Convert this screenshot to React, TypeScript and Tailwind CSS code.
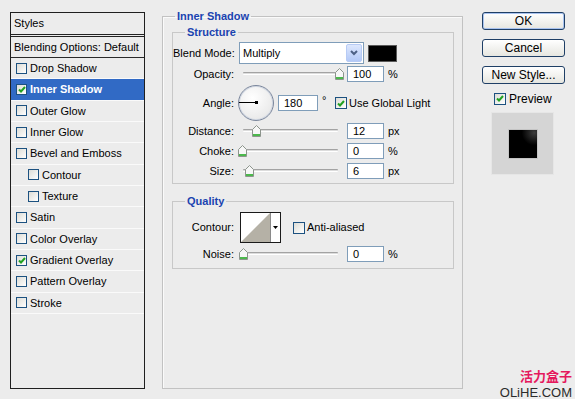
import type { JSX } from 'react'

const Check = ({ checked = false, small = false }: { checked?: boolean; small?: boolean }): JSX.Element => (
    <div className={`${small ? 'w-[11px] h-[11px]' : 'w-[12px] h-[12px]'} shrink-0 border border-[#1c5180] bg-gradient-to-br from-[#dcdcd6] to-white flex items-center justify-center`}>
        {checked && (
            <svg width="8" height="7" viewBox="0 0 8 7">
                <polyline points="1,3.5 3,5.5 7,1" fill="none" stroke="#21a121" strokeWidth="2" />
            </svg>
        )}
    </div>
)

const Thumb = ({ left }: { left: number }): JSX.Element => (
    <svg className="absolute top-[2px]" style={{ left }} width="9" height="12" viewBox="0 0 9 12">
        <polygon points="0.5,4.5 4.5,0.5 8.5,4.5 8.5,11.5 0.5,11.5" fill="#f7f7f7" stroke="#8d958d" />
        <rect x="1" y="9" width="7" height="2" fill="#4cb84c" />
    </svg>
)

const Slider = ({ pos }: { pos: number }): JSX.Element => (
    <div className="relative -ml-[2px] w-[108px] h-[16px]">
        <div className="ml-[6px] mt-[6px] w-[95px] h-[3px] border-t border-[#a3a3a3] border-b border-b-white bg-[#dcdcdc] rounded-[1px]" />
        <Thumb left={pos} />
    </div>
)

const Field = ({ value, w = 'w-[37px]' }: { value: string; w?: string }): JSX.Element => (
    <div className={`${w} h-[16px] border border-[#7f9db9] bg-white pl-[5px] leading-[14px]`}>{value}</div>
)

const Label = ({ text }: { text: string }): JSX.Element => (
    <div className="w-[66px] shrink-0 pr-[5px] text-right whitespace-nowrap">{text}</div>
)

const SliderRow = ({ label, pos, value, unit, top }: { label: string; pos: number; value: string; unit: string; top: string }): JSX.Element => (
    <div className={`flex items-center h-[16px] ${top}`}>
        <Label text={label} />
        <Slider pos={pos} />
        <div className="ml-[2px]"><Field value={value} /></div>
        <span className="ml-[4px]">{unit}</span>
    </div>
)

const Button = ({ text, primary = false, top = '' }: { text: string; primary?: boolean; top?: string }): JSX.Element => (
    <div className={`${top} w-[83px] h-[18px] rounded-[3px] border border-[#1f3f66] bg-gradient-to-b from-white to-[#e6e6e0] flex items-center justify-center text-[12px] ${primary ? 'shadow-[inset_0_0_0_1px_#a9c3ef]' : ''}`}>
        {text}
    </div>
)

const styleItems: [string, boolean, boolean, boolean][] = [
    ['Drop Shadow', false, false, false],
    ['Inner Shadow', true, false, true],
    ['Outer Glow', false, false, false],
    ['Inner Glow', false, false, false],
    ['Bevel and Emboss', false, false, false],
    ['Contour', false, true, false],
    ['Texture', false, true, false],
    ['Satin', false, false, false],
    ['Color Overlay', false, false, false],
    ['Gradient Overlay', true, false, false],
    ['Pattern Overlay', false, false, false],
    ['Stroke', false, false, false],
]

const App = (): JSX.Element => {
    return (
        <div className="relative w-[575px] h-[399px] overflow-hidden bg-[#ececec] flex items-start text-[11px] text-black font-['Liberation_Sans',Arial,sans-serif]">
            {/* Styles list */}
            <div className="ml-[10px] mt-[12px] w-[135px] h-[377px] border border-[#1f1f1f] flex flex-col">
                <div className="h-[24px] border-b-[3px] border-double border-[#222] pl-[3px] flex items-center">Styles</div>
                <div className="h-[21px] border-b border-[#2a2a2a] pl-[3px] flex items-center">Blending Options: Default</div>
                {styleItems.map(([name, checked, sub, selected]) => (
                    <div
                        key={name}
                        className={`h-[21.33px] border-b border-[#fafafa] flex items-center ${sub ? 'pl-[17px]' : 'pl-[5px]'} ${selected ? 'bg-[#316ac5] text-white font-bold' : ''}`}
                    >
                        <Check checked={checked} small />
                        <span className="ml-[3px]">{name}</span>
                    </div>
                ))}
            </div>

            {/* Inner Shadow panel */}
            <fieldset className="ml-[17px] mt-[10px] w-[301px] h-[379px] border border-[#c2c2c2] shadow-[inset_1px_1px_0_#fafafa]">
                <legend className="ml-[12px] px-[2px] font-bold text-[#1a43b0] leading-[12px]">Inner Shadow</legend>

                <fieldset className="ml-[9px] mt-[4px] w-[282px] border border-[#c8c8c8] pt-[4px] pb-[4px]">
                    <legend className="ml-[12px] px-[2px] font-bold text-[#1a43b0] leading-[12px]">Structure</legend>

                    <div className="flex items-center h-[22px]">
                        <Label text="Blend Mode:" />
                        <div className="w-[125px] h-[22px] border border-[#7f9db9] bg-white flex items-center">
                            <span className="pl-[3px]">Multiply</span>
                            <div className="ml-auto mr-[1px] w-[16px] h-[18px] rounded-[2px] border border-[#b7cbf5] bg-gradient-to-b from-[#dde7fd] to-[#b3c9f7] flex items-center justify-center">
                                <svg width="8" height="6" viewBox="0 0 8 6">
                                    <polyline points="1,1 4,4 7,1" fill="none" stroke="#4d6185" strokeWidth="2" />
                                </svg>
                            </div>
                        </div>
                        <div className="ml-[4px] w-[29px] h-[17px] bg-black border border-[#5a5a5a]" />
                    </div>

                    <SliderRow label="Opacity:" pos={98} value="100" unit="%" top="mt-[2px]" />

                    <div className="flex items-center h-[36px] mt-[3px]">
                        <Label text="Angle:" />
                        <div className="relative -ml-[1px] w-[36px] h-[36px] rounded-full border border-[#7a869c] bg-[radial-gradient(circle_at_40%_35%,#ffffff,#e2e2e2)] shadow-[inset_0_0_0_1px_#d3d9e3]">
                            <div className="absolute left-0 top-[16px] w-[18px] h-[1px] bg-black" />
                            <div className="absolute left-[16px] top-[15px] w-[3px] h-[3px] bg-black" />
                        </div>
                        <div className="ml-[4px]"><Field value="180" w="w-[40px]" /></div>
                        <span className="ml-[4px] w-[13px] -mt-[6px]">°</span>
                        <Check checked />
                        <span className="ml-[2px]">Use Global Light</span>
                    </div>

                    <SliderRow label="Distance:" pos={15} value="12" unit="px" top="mt-[2px]" />
                    <SliderRow label="Choke:" pos={1} value="0" unit="%" top="mt-[4px]" />
                    <SliderRow label="Size:" pos={8} value="6" unit="px" top="mt-[4px]" />
                </fieldset>

                <fieldset className="ml-[9px] mt-[11px] w-[282px] border border-[#c8c8c8] pt-[5px] pb-[6px]">
                    <legend className="ml-[12px] px-[2px] font-bold text-[#1a43b0] leading-[12px]">Quality</legend>

                    <div className="flex items-center h-[31px]">
                        <Label text="Contour:" />
                        <div className="ml-[1px] w-[41px] h-[31px] border border-[#1a1a1a] flex bg-white">
                            <svg width="29" height="29" viewBox="0 0 29 29" className="shrink-0">
                                <polygon points="0,29 29,0 29,29" fill="#b5b1a6" />
                            </svg>
                            <div className="flex-1 border-l border-[#8a8a8a] flex items-center justify-center">
                                <svg width="5" height="3" viewBox="0 0 5 3">
                                    <polygon points="0,0 5,0 2.5,3" fill="#000" />
                                </svg>
                            </div>
                        </div>
                        <div className="ml-[12px]"><Check /></div>
                        <span className="ml-[2px]">Anti-aliased</span>
                    </div>

                    <SliderRow label="Noise:" pos={2} value="0" unit="%" top="mt-[3px]" />
                </fieldset>
            </fieldset>

            {/* Buttons & preview */}
            <div className="ml-[19px] mt-[12px] w-[83px] flex flex-col">
                <Button text="OK" primary />
                <Button text="Cancel" top="mt-[9px]" />
                <Button text="New Style..." top="mt-[9px]" />
                <div className="mt-[8px] h-[13px] flex items-center text-[12px]">
                    <div className="ml-[12px]"><Check checked /></div>
                    <span className="ml-[3px]">Preview</span>
                </div>
                <div className="mt-[7px] ml-[9px] w-[63px] h-[63px] bg-[#d5d5d5] border border-[#e6e6e6] flex items-center justify-center">
                    <div className="w-[30px] h-[30px] bg-[radial-gradient(circle_at_90%_10%,#3c3c3c,#000000_35%)] border border-[#c4c4c4]" />
                </div>
            </div>

            {/* watermark */}
            <div className="absolute right-[3px] bottom-0 flex flex-col items-end">
                <div className="mb-[5px] h-[12px] font-bold text-[13px] text-[#e5195e] font-['Noto_Sans_CJK_SC',sans-serif] leading-[12px]">活力盒子</div>
                <div className="h-[12px] text-[13px] text-[#2b2b2b] leading-[12px]">OLiHE.COM</div>
            </div>
        </div>
    )
}

export default App
